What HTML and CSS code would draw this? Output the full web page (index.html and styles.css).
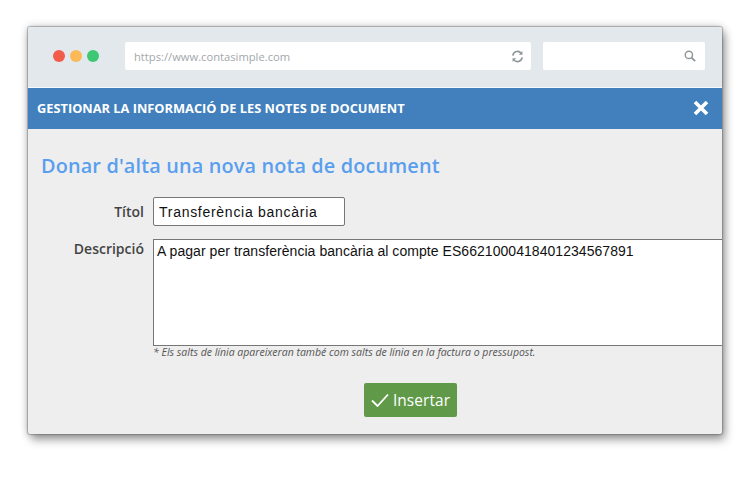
FILE: index.html
```html
<!DOCTYPE html>
<html>
<head>
  <meta charset="UTF-8">
  <title>Contasimple</title>
  <link rel="stylesheet" href="styles.css">
</head>
<body>

  <div class="finestra">
    <div class="barra">
      <div class="punts">
        <span class="punt vermell"></span>
        <span class="punt groc"></span>
        <span class="punt verd"></span>
      </div>
      <div class="adreca">
        <span>https://www.contasimple.com</span>
        <svg class="icona" viewBox="0 0 14 14" width="13" height="13" fill="none" stroke="#8f969a" stroke-width="1.7">
          <path d="M2 6 A5 5 0 0 1 11 3.6"/>
          <path d="M12 8 A5 5 0 0 1 3 10.4"/>
          <path d="M12.3 1.2 V5 H8.5 Z" fill="#8f969a" stroke="none"/>
          <path d="M1.7 12.8 V9 H5.5 Z" fill="#8f969a" stroke="none"/>
        </svg>
      </div>
      <div class="cerca">
        <svg class="icona" viewBox="0 0 14 14" width="12" height="12" fill="none" stroke="#8f969a" stroke-width="1.7">
          <circle cx="5.7" cy="5.7" r="4.2"/>
          <path d="M8.8 8.8 L13 13" stroke-width="2.2"/>
        </svg>
      </div>
    </div>

    <div class="capcalera">
      <h2>GESTIONAR LA INFORMACIÓ DE LES NOTES DE DOCUMENT</h2>
      <svg class="tancar" viewBox="0 0 16 16" width="16" height="16" stroke="#fff" stroke-width="3.6">
        <path d="M2 2 L14 14 M14 2 L2 14"/>
      </svg>
    </div>

    <div class="contingut">
      <h1>Donar d'alta una nova nota de document</h1>

      <div class="fila">
        <label>Títol</label>
        <input class="camp" type="text" value="Transferència bancària">
      </div>

      <div class="fila fila-descripcio">
        <label>Descripció</label>
        <textarea class="area">A pagar per transferència bancària al compte ES6621000418401234567891</textarea>
      </div>

      <p class="nota">* Els salts de línia apareixeran també com salts de línia en la factura o pressupost.</p>

      <div class="accions">
        <button class="boto">
          <svg viewBox="0 0 18 14" width="18" height="14" fill="none" stroke="#fff" stroke-width="1.8">
            <path d="M1 7.5 L6.5 13 L17 1.5"/>
          </svg>
          Insertar
        </button>
      </div>
    </div>
  </div>

</body>
</html>
```

FILE: styles.css
```css
html, body {
  height: 100%;
}

body {
  background-color: #fff;
  font-family: 'Open Sans', sans-serif;
  margin: 0;
  padding: 27px 28px 0;
  box-sizing: border-box;
  overflow: hidden;
}

.finestra {
  width: 694px;
  height: 407px;
  background-color: #eeeeee;
  overflow: hidden;
  border-radius: 2px;
  box-shadow: 0 0 1px 1px rgba(90,90,90,0.4), 0 0 8px rgba(0,0,0,0.25), 3px 6px 10px rgba(0,0,0,0.35);
  display: flex;
  flex-direction: column;
}

.barra {
  height: 58px;
  background-color: #e2e8ec;
  border-bottom: 1px solid #f7f9fa;
  display: flex;
  flex: none;
  align-items: center;
  padding: 0 17px 2px 25px;
}

.punts {
  display: flex;
  gap: 5px;
  width: 72px;
}

.punt {
  width: 12px;
  height: 12px;
  border-radius: 50%;
}

.vermell { background-color: #f25c4a; }
.groc { background-color: #fbb957; }
.verd { background-color: #3fc873; }

.adreca, .cerca {
  height: 28px;
  background-color: #fff;
  border-radius: 2px;
  display: flex;
  align-items: center;
  box-sizing: border-box;
}

.adreca {
  width: 406px;
  padding: 0 7px 0 9px;
  justify-content: space-between;
  font-size: 11.2px;
  color: #a3a8ab;
  margin-right: 12px;
}

.cerca {
  width: 162px;
  padding-right: 9px;
  justify-content: flex-end;
}

.capcalera {
  height: 41px;
  box-sizing: border-box;
  flex: none;
  background-color: #4180bd;
  display: flex;
  align-items: center;
  justify-content: space-between;
  padding: 0 13px 2px 9px;
}

.capcalera h2 {
  color: #fff;
  font-size: 12.8px;
  font-weight: 700;
  margin: 0;
}

.contingut {
  padding: 23px 0 0 13px;
}

h1 {
  color: #5a9fee;
  font-size: 19.85px;
  font-weight: 600;
  line-height: 27px;
  margin: 0 0 18px;
  letter-spacing: 0.15px;
}

.fila {
  display: flex;
  align-items: center;
  gap: 9px;
}

.fila label {
  flex: none;
  width: 103px;
  text-align: right;
  color: #444;
  font-size: 14px;
  font-weight: 600;
}

.camp {
  width: 192px;
  height: 29px;
  box-sizing: border-box;
  border: 1px solid #767676;
  border-radius: 2px;
  padding: 0 5px;
  font-family: 'Liberation Sans', sans-serif;
  font-size: 14px;
  letter-spacing: 0.72px;
  color: #111;
  background-color: #fff;
}

.fila-descripcio {
  align-items: flex-start;
  margin-top: 13px;
}

.area {
  flex: none;
  width: 600px;
  height: 107px;
  box-sizing: border-box;
  border: 1px solid #767676;
  border-radius: 0;
  padding: 3px;
  margin: 0;
  resize: none;
  overflow: hidden;
  font-family: 'Liberation Sans', sans-serif;
  font-size: 14px;
  line-height: 16px;
  letter-spacing: 0.05px;
  color: #111;
}

.nota {
  font-size: 10.5px;
  font-style: italic;
  color: #555;
  margin: 0 0 0 112px;
  line-height: 13px;
}

.accions {
  display: flex;
  margin-top: 24px;
  padding-left: 323px;
}

.boto {
  height: 34px;
  width: 93px;
  display: flex;
  align-items: center;
  justify-content: center;
  gap: 4px;
  background-color: #609a48;
  border: none;
  border-radius: 2px;
  color: #fff;
  font-family: 'Open Sans', sans-serif;
  font-size: 15.4px;
  letter-spacing: 0.1px;
  padding: 0;
}

.boto:hover {
  background-color: #558a40;
}
```
